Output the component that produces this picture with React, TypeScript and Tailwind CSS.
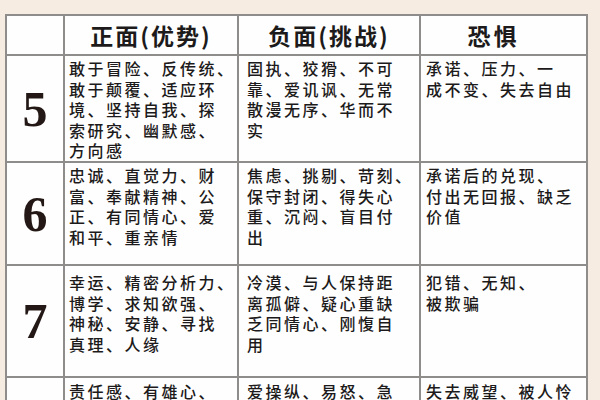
const rows = [
  {
    num: "5",
    h: "h-[105px]",
    pt: "pt-[2px]",
    cells: [
      ["敢于冒险、反传统、", "敢于颠覆、适应环", "境、坚持自我、探", "索研究、幽默感、", "方向感"],
      ["固执、狡猾、不可", "靠、爱讥讽、无常", "散漫无序、华而不", "实"],
      ["承诺、压力、一", "成不变、失去自由"],
    ],
  },
  {
    num: "6",
    h: "h-[101px]",
    pt: "pt-[2px]",
    cells: [
      ["忠诚、直觉力、财", "富、奉献精神、公", "正、有同情心、爱", "和平、重亲情"],
      ["焦虑、挑剔、苛刻、", "保守封闭、得失心", "重、沉闷、盲目付", "出"],
      ["承诺后的兑现、", "付出无回报、缺乏", "价值"],
    ],
  },
  {
    num: "7",
    h: "h-[110px]",
    pt: "pt-[6px]",
    cells: [
      ["幸运、精密分析力、", "博学、求知欲强、", "神秘、安静、寻找", "真理、人缘"],
      ["冷漠、与人保持距", "离孤僻、疑心重缺", "乏同情心、刚愎自", "用"],
      ["犯错、无知、", "被欺骗"],
    ],
  },
  {
    num: "8",
    h: "h-[100px]",
    pt: "pt-[3px]",
    cells: [
      ["责任感、有雄心、"],
      ["爱操纵、易怒、急"],
      ["失去威望、被人怜"],
    ],
  },
]

const padX = ["pl-[4px]", "pl-[8px]", "pl-[5px]"]

const Lines = ({ lines }: { lines: string[] }) => (
  <>
    {lines.map((l, i) => (
      <div key={i} className="whitespace-nowrap">
        {l}
      </div>
    ))}
  </>
)

export default function App() {
  return (
    <div className="h-[400px] w-[600px] overflow-hidden bg-[#f7ece2] pt-[14px] pl-[5px]">
      <div
        className="grid w-[583px] grid-cols-[56px_172px_180px_165px] gap-[2px] bg-[#8f8d8b] p-[2px] text-[#1c1a1a]"
        style={{ fontFamily: '"Noto Sans CJK SC", "Noto Sans", sans-serif' }}
      >
        <div className="h-[38px] bg-[#fefefe]" />
        <div className="flex h-[38px] items-center justify-center bg-[#fefefe] text-[23px] font-bold tracking-[2px]">
          正面(优势)
        </div>
        <div className="flex h-[38px] items-center justify-center bg-[#fefefe] text-[23px] font-bold tracking-[2px]">
          负面(挑战)
        </div>
        <div className="flex h-[38px] items-center justify-center bg-[#fefefe] pr-[20px] text-[23px] font-bold tracking-[3px]">
          恐惧
        </div>

        {rows.map((r) => (
          <div key={r.num} className="contents">
            <div
              className={`${r.h} flex items-center justify-center bg-[#fefefe] text-[50px] font-bold leading-none text-[#231815]`}
              style={{ fontFamily: '"Liberation Serif", serif' }}
            >
              {r.num}
            </div>
            {r.cells.map((c, i) => (
              <div
                key={i}
                className={`${r.h} ${r.pt} ${padX[i]} bg-[#fefefe] text-[16px] font-medium leading-[20.5px] tracking-[2.5px]`}
              >
                <Lines lines={c} />
              </div>
            ))}
          </div>
        ))}
      </div>
    </div>
  )
}
